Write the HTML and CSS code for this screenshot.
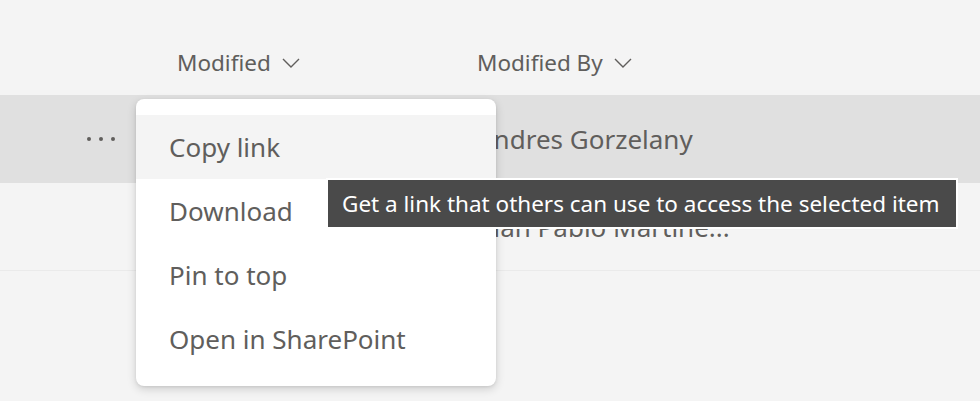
FILE: index.html
```html
<!DOCTYPE html>
<html lang="en">
<head>
  <meta charset="UTF-8" />
  <title>Files</title>
  <link rel="stylesheet" href="styles.css">
</head>
<body>
  <div class="list">
    <div class="list-header">
      <div class="col-more"></div>
      <div class="col col-modified">Modified <svg class="chev" width="18" height="10" viewBox="0 0 18 10"><path d="M1 1 L9 9 L17 1" fill="none" stroke="#605e5c" stroke-width="1.4"/></svg></div>
      <div class="col col-by">Modified By <svg class="chev" width="18" height="10" viewBox="0 0 18 10"><path d="M1 1 L9 9 L17 1" fill="none" stroke="#605e5c" stroke-width="1.4"/></svg></div>
    </div>
    <div class="row selected">
      <div class="col-more"><span class="dots"><i></i><i></i><i></i></span></div>
      <div class="col col-modified"></div>
      <div class="col col-by">Andres Gorzelany</div>
    </div>
    <div class="row">
      <div class="col-more"></div>
      <div class="col col-modified"></div>
      <div class="col col-by">Juan Pablo Martine...</div>
    </div>
  </div>

  <ul class="menu">
    <li class="hover">Copy link</li>
    <li>Download</li>
    <li>Pin to top</li>
    <li>Open in SharePoint</li>
  </ul>

  <div class="tooltip">Get a link that others can use to access the selected item</div>
</body>
</html>
```
FILE: styles.css
```css
body { margin: 0; background: #f4f4f4; font-family: "Noto Sans", "Open Sans", sans-serif; color: #605e5c; overflow: hidden; }
.list { width: 980px; }
.list-header { display: flex; align-items: center; height: 95px; box-sizing: border-box; padding-top: 30px; font-size: 22.5px; }
.row { display: flex; align-items: center; height: 88px; font-size: 26px; border-bottom: 1px solid #eaeaea; box-sizing: border-box; }
.row.selected { background: #e0e0e0; border-bottom: none; }
.col-more { width: 177px; display: flex; justify-content: flex-end; box-sizing: border-box; padding-right: 62px; }
.col-modified { width: 300px; }
.col-by { flex: 1; }
.chev { margin-left: 5px; vertical-align: middle; position: relative; top: -2px; }
.dots { display: flex; gap: 8px; }
.dots i { width: 4px; height: 4px; border-radius: 50%; background: #605e5c; }
.menu { position: absolute; left: 136px; top: 99px; width: 360px; margin: 0; padding: 16px 0 15px; list-style: none; background: #fff; border-radius: 8px; box-shadow: 0 3px 10px rgba(0,0,0,0.16), 0 1px 3px rgba(0,0,0,0.08); font-size: 26px; }
.menu li { height: 64px; line-height: 64px; padding-left: 33px; }
.menu li.hover { background: #f4f4f4; }
.tooltip { position: absolute; left: 326px; top: 178px; background: #4a4a4a; color: #fff; border: 2px solid #fff; font-size: 22.5px; line-height: 47px; padding: 0 16px 0 14px; white-space: nowrap; }
```
